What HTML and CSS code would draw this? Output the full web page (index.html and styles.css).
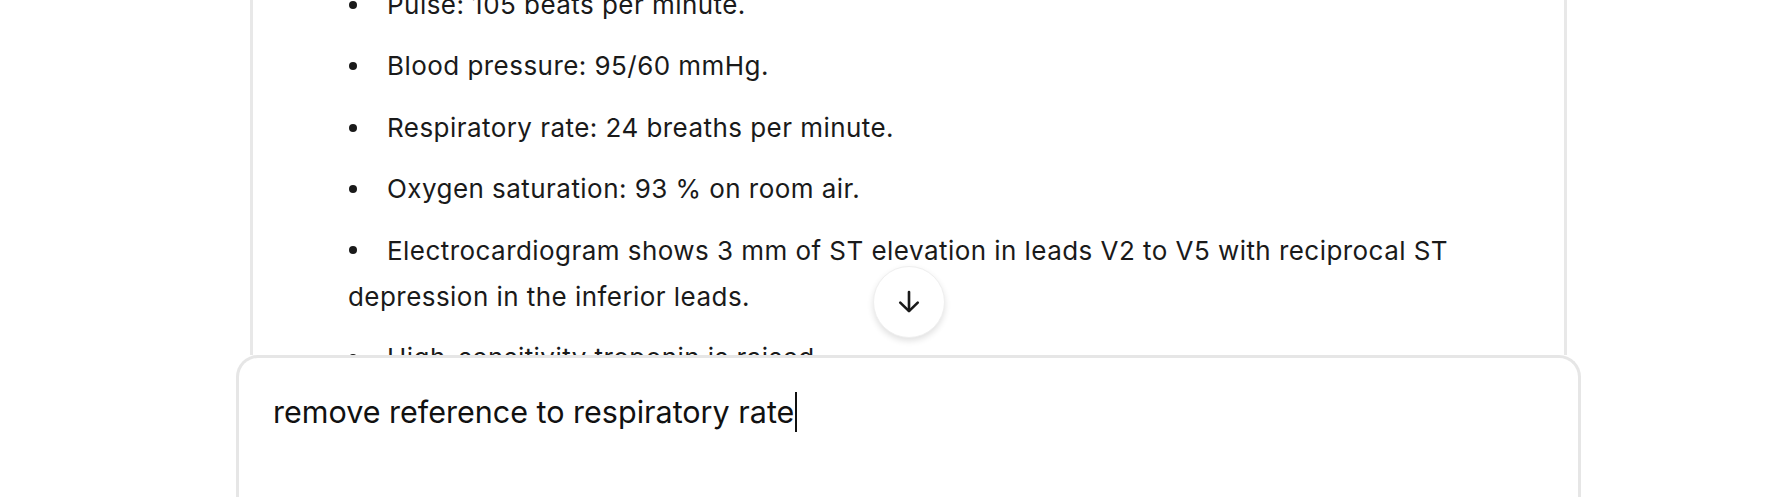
FILE: index.html
```html
<!DOCTYPE html>
<html lang="en">
<head>
<meta charset="utf-8">
<title>Case edit</title>
<link rel="stylesheet" href="styles.css">
</head>
<body>
<div class="app">
  <main class="thread">
    <article class="card">
      <ul class="vitals">
        <li>Pulse: 105 beats per minute.</li>
        <li>Blood pressure: 95/60 mmHg.</li>
        <li>Respiratory rate: 24 breaths per minute.</li>
        <li>Oxygen saturation: 93 % on room air.</li>
        <li>Electrocardiogram shows 3 mm of ST elevation in leads V2 to V5 with reciprocal ST depression in the inferior leads.</li>
        <li>High-sensitivity troponin is raised.</li>
      </ul>
    </article>
    <button class="scroll-down" type="button" aria-label="Scroll to bottom">
      <svg width="30" height="30" viewBox="0 0 24 24" fill="none" stroke="currentColor" stroke-width="2.1" stroke-linecap="round" stroke-linejoin="round"><path d="M12 4v15"/><path d="M5 12.5 12 19.3l7-6.8"/></svg>
    </button>
  </main>
  <form class="composer">
    <div class="input">remove reference to respiratory rate<span class="caret"></span></div>
  </form>
</div>
</body>
</html>
```
FILE: styles.css
```css
html, body {
  margin: 0;
  padding: 0;
  background: #ffffff;
}
body {
  font-family: Inter, "Noto Sans", sans-serif;
  color: #1a1a1a;
  overflow: hidden;
  height: 497px;
}
.app {
  width: 1345px;
  margin-left: 236px;
  height: 497px;
  display: flex;
  flex-direction: column;
}
.thread {
  position: relative;
  height: 355px;
  flex: none;
  overflow: hidden;
}
.card {
  margin: -18px 14px 0;
  border: 3px solid #e8e8e8;
  border-top: none;
  padding: 0 95px;
  background: #fff;
}
.vitals {
  list-style: none;
  margin: 0;
  padding: 0;
  font-size: 26px;
  letter-spacing: 0.45px;
  line-height: 46px;
}
.vitals li {
  margin: 0 0 15.4px;
}
.vitals li::before {
  content: "";
  display: inline-block;
  width: 8px;
  height: 8px;
  border-radius: 50%;
  background: #1a1a1a;
  margin: 0 30px 0 1px;
  vertical-align: middle;
  position: relative;
  top: -2px;
}
.scroll-down {
  position: absolute;
  left: 50%;
  bottom: 17px;
  width: 72px;
  height: 72px;
  margin-left: -36px;
  border-radius: 50%;
  border: 1px solid #efefef;
  background: #fff;
  color: #1a1a1a;
  box-shadow: 0 3px 6px rgba(0, 0, 0, 0.12);
  display: flex;
  align-items: center;
  justify-content: center;
  padding: 0;
}
.composer {
  flex: 1;
  margin: 0;
  border: 3px solid #e6e6e6;
  border-bottom: none;
  border-radius: 22px 22px 0 0;
  background: #fff;
  padding: 34px 34px 0;
}
.input {
  font-size: 30.5px;
  letter-spacing: 0;
  line-height: 40px;
  color: #111;
  display: flex;
  align-items: center;
}
.caret {
  display: inline-block;
  width: 2px;
  height: 40px;
  background: #111;
  margin-left: 1px;
}
```
